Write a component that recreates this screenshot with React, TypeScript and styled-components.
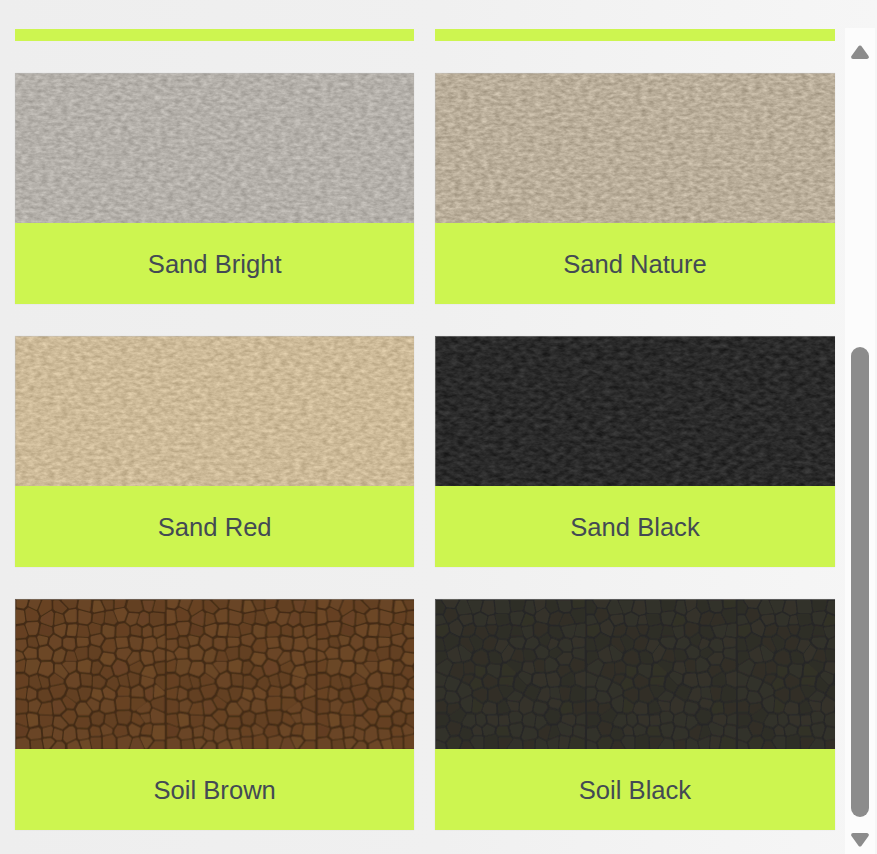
import React from "react";
import styled, { createGlobalStyle } from "styled-components";

const Global = createGlobalStyle`
  html, body { margin: 0; padding: 0; height: 854px; overflow: hidden; }
  body { background: #f0f0f0; font-family: "Liberation Sans", Arial, sans-serif; }
`;

const Page = styled.div`
  display: flex;
  width: 877px;
  height: 854px;
  overflow: hidden;
  background: linear-gradient(90deg, #eeeeee 0%, #f0f0f0 50%, #f6f6f6 100%);
`;

const List = styled.div`
  width: 845px;
  flex: none;
  box-sizing: border-box;
  padding: 28.95px 0 0 15px;
  display: grid;
  grid-template-columns: 399.4px 400px;
  column-gap: 20.6px;
  row-gap: 31.95px;
  align-content: start;
`;

const Card = styled.div`
  display: flex;
  flex-direction: column;
  box-shadow: 0 0 1px rgba(0, 0, 0, 0.12);
`;

const Picture = styled.div`
  height: 150.45px;
  overflow: hidden;
  position: relative;
  svg { display: block; width: 100%; height: 100%; }
  &::after {
    content: "";
    position: absolute;
    inset: 0;
    box-shadow: inset 1px 1px 0 rgba(190, 190, 190, 0.35);
  }
`;

const Caption = styled.div<{ $stub?: boolean }>`
  height: ${(p) => (p.$stub ? "12px" : "80.7px")};
  background: #cdf550;
  color: #434a54;
  font-size: 25.6px;
  line-height: 83.8px;
  text-align: center;
`;

const Track = styled.div`
  margin: 28px 0 0;
  width: 30px;
  height: 826px;
  background: #fcfcfc;
  display: flex;
  flex-direction: column;
  align-items: center;
  padding-top: 17px;
  box-sizing: border-box;
`;

const Arrow = styled.svg`
  display: block;
  width: 18px;
  height: 14px;
  flex: none;
  overflow: visible;
`;

const Thumb = styled.div`
  width: 18px;
  height: 470px;
  margin: 288px 0 16px;
  flex: none;
  background: #8c8c8c;
  border-radius: 9px;
`;

/* small seeded generator so the drawn textures stay the same on every load */
const rng = (seed: number) => () => {
  seed = (seed + 0x6d2b79f5) | 0;
  let t = Math.imul(seed ^ (seed >>> 15), 1 | seed);
  t = (t + Math.imul(t ^ (t >>> 7), 61 | t)) ^ t;
  return ((t ^ (t >>> 14)) >>> 0) / 4294967296;
};

type Pt = [number, number];

const clip = (poly: Pt[], a: Pt, b: Pt): Pt[] => {
  const mx = (a[0] + b[0]) / 2;
  const my = (a[1] + b[1]) / 2;
  const nx = b[0] - a[0];
  const ny = b[1] - a[1];
  const side = (p: Pt) => (p[0] - mx) * nx + (p[1] - my) * ny;
  const out: Pt[] = [];
  poly.forEach((p, i) => {
    const q = poly[(i + 1) % poly.length];
    const sp = side(p);
    const sq = side(q);
    if (sp <= 0) out.push(p);
    if (sp < 0 !== sq < 0 && sp !== sq) {
      const t = sp / (sp - sq);
      out.push([p[0] + (q[0] - p[0]) * t, p[1] + (q[1] - p[1]) * t]);
    }
  });
  return out;
};

const TILE = 151;

const makeCells = (seed: number, gap: number) => {
  const r = rng(seed);
  const n = 12;
  const step = TILE / n;
  const pts: Pt[] = [];
  for (let y = 0; y < n; y++)
    for (let x = 0; x < n; x++)
      pts.push([(x + 0.5 + (r() - 0.5) * 0.7) * step, (y + 0.5 + (r() - 0.5) * 0.7) * step]);
  return pts.map((p) => {
    let poly: Pt[] = [
      [0, 0],
      [TILE, 0],
      [TILE, TILE],
      [0, TILE],
    ];
    pts.forEach((o) => {
      if (o !== p && Math.hypot(o[0] - p[0], o[1] - p[1]) < step * 3) poly = clip(poly, p, o);
    });
    const cx = poly.reduce((s, c) => s + c[0], 0) / poly.length;
    const cy = poly.reduce((s, c) => s + c[1], 0) / poly.length;
    const size = Math.sqrt(
      Math.abs(poly.reduce((s, c, i) => {
        const q = poly[(i + 1) % poly.length];
        return s + c[0] * q[1] - q[0] * c[1];
      }, 0)) / 2,
    );
    const k = Math.max(0.2, (size / 2 - gap) / (size / 2));
    const d = poly
      .map((c) => [cx + (c[0] - cx) * k, cy + (c[1] - cy) * k].map((v) => v.toFixed(1)).join(","))
      .join(" ");
    return { d, shade: r() };
  });
};

const mix = (a: number[], b: number[], t: number) =>
  `rgb(${a.map((v, i) => Math.round(v + (b[i] - v) * t)).join(",")})`;

const Cobble: React.FC<{ id: string; seed: number; dark: number[]; light: number[]; line: string; blur: number }> = ({
  id,
  seed,
  dark,
  light,
  line,
  blur,
}) => {
  const cells = React.useMemo(() => makeCells(seed, 1.9), [seed]);
  return (
    <svg viewBox="0 0 400 150" preserveAspectRatio="none" aria-hidden>
      <defs>
        <filter id={`${id}-soft`} x="0" y="0" width="100%" height="100%">
          <feGaussianBlur stdDeviation={blur} />
        </filter>
        <pattern id={id} width={TILE} height={TILE} patternUnits="userSpaceOnUse">
          <rect width={TILE} height={TILE} fill={line} />
          {cells.map((c, i) => {
            const fill = mix(dark, light, c.shade);
            return (
              <polygon key={i} points={c.d} fill={fill} stroke={fill} strokeWidth={2.2} strokeLinejoin="round" />
            );
          })}
          <line x1={0.5} y1={0} x2={0.5} y2={TILE} stroke={line} strokeWidth={1} opacity={0.6} />
        </pattern>
      </defs>
      <rect width="400" height="150" fill={`url(#${id})`} filter={`url(#${id}-soft)`} />
    </svg>
  );
};

const Sand: React.FC<{ id: string; seed: number; rgb: number[]; freq: string; gain: number }> = ({
  id,
  seed,
  rgb,
  freq,
  gain,
}) => {
  const row = (v: number, i: number) =>
    [i === 0 ? gain : 0, i === 1 ? gain : 0, i === 2 ? gain : 0, 0, v / 255 - gain * 0.5].join(" ");
  const matrix = `${row(rgb[0], 0)} ${row(rgb[1], 1)} ${row(rgb[2], 2)} 0 0 0 0 1`;
  return (
    <svg viewBox="0 0 400 150" preserveAspectRatio="none" aria-hidden>
      <defs>
        <filter id={id} x="0" y="0" width="100%" height="100%" colorInterpolationFilters="sRGB">
          <feTurbulence type="fractalNoise" baseFrequency={freq} numOctaves={3} seed={seed} />
          <feColorMatrix type="matrix" values="1 0 0 0 0 1 0 0 0 0 1 0 0 0 0 0 0 0 0 1" />
          <feColorMatrix type="matrix" values={matrix} />
        </filter>
      </defs>
      <rect width="400" height="150" filter={`url(#${id})`} />
    </svg>
  );
};

const items: { name: string; art: React.ReactNode }[] = [
  { name: "Sand Bright", art: <Sand id="s1" seed={3} rgb={[180, 176, 170]} freq="0.15 0.3" gain={0.24} /> },
  { name: "Sand Nature", art: <Sand id="s2" seed={8} rgb={[186, 174, 154]} freq="0.15 0.3" gain={0.28} /> },
  { name: "Sand Red", art: <Sand id="s3" seed={12} rgb={[205, 186, 152]} freq="0.15 0.3" gain={0.24} /> },
  { name: "Sand Black", art: <Sand id="s4" seed={21} rgb={[42, 42, 42]} freq="0.13 0.24" gain={0.2} /> },
  {
    name: "Soil Brown",
    art: <Cobble id="c1" seed={77} dark={[98, 62, 33]} light={[110, 72, 40]} line="#432b14" blur={0.4} />,
  },
  {
    name: "Soil Black",
    art: <Cobble id="c2" seed={131} dark={[46, 45, 38]} light={[53, 51, 43]} line="#282827" blur={0.55} />,
  },
];

export default function App() {
  return (
    <Page>
      <Global />
      <List>
        <Caption $stub />
        <Caption $stub />
        {items.map((it) => (
          <Card key={it.name}>
            <Picture>{it.art}</Picture>
            <Caption>{it.name}</Caption>
          </Card>
        ))}
      </List>
      <Track>
        <Arrow viewBox="0 0 18 14">
          <path d="M9 2.4 L16 12 H2 Z" fill="#8c8c8c" stroke="#8c8c8c" strokeWidth="3.8" strokeLinejoin="round" />
        </Arrow>
        <Thumb />
        <Arrow viewBox="0 0 18 14">
          <path d="M9 11.6 L16 2 H2 Z" fill="#8c8c8c" stroke="#8c8c8c" strokeWidth="3.8" strokeLinejoin="round" />
        </Arrow>
      </Track>
    </Page>
  );
}
